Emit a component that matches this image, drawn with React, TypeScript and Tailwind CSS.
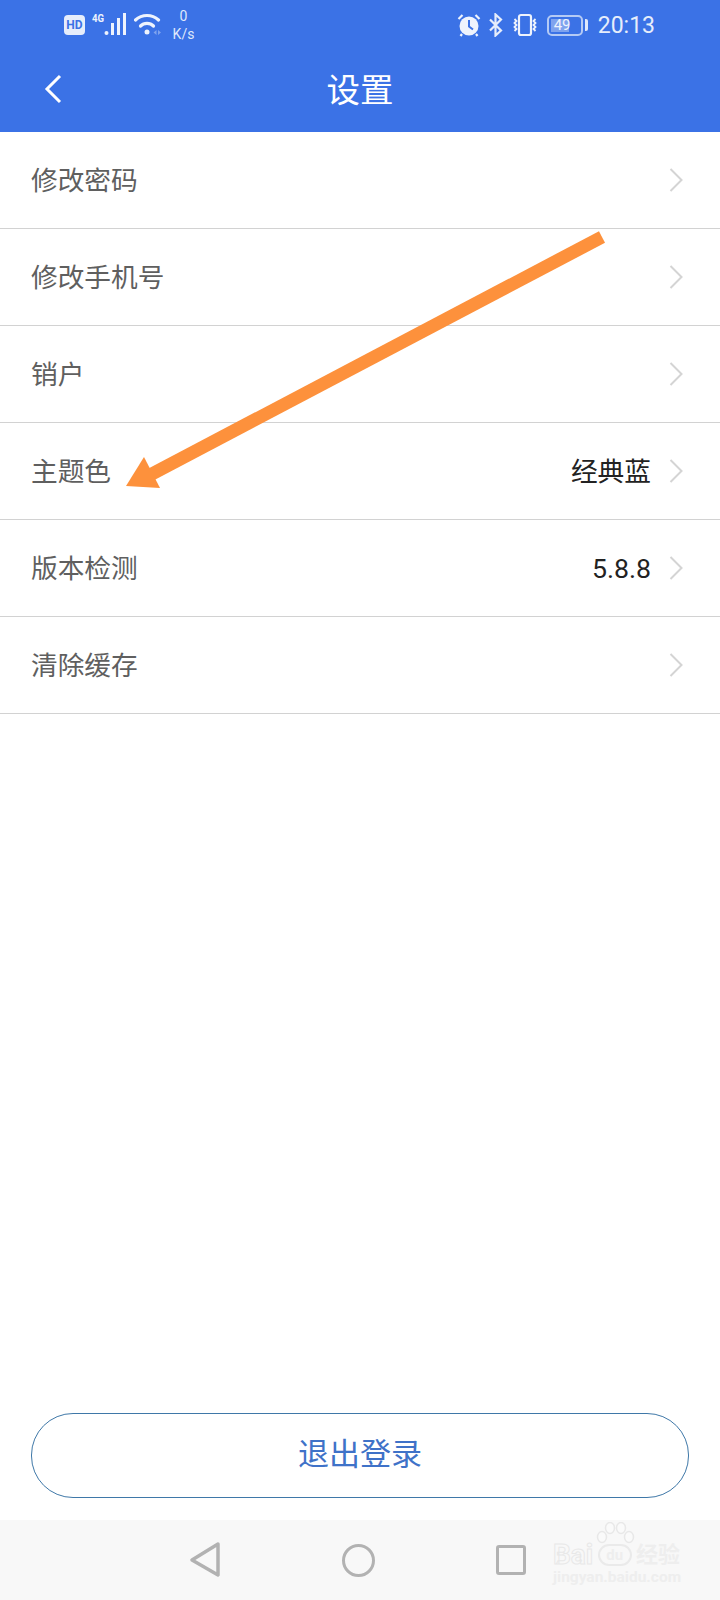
const rows = [
  { label: '修改密码' },
  { label: '修改手机号' },
  { label: '销户' },
  { label: '主题色', value: '经典蓝' },
  { label: '版本检测', value: '5.8.8' },
  { label: '清除缓存' },
];

function RowChevron() {
  return (
    <svg width="14" height="26" viewBox="0 0 14 26" fill="none" stroke="#d4d4d4" strokeWidth="2" className="shrink-0">
      <path d="M1.500 2 L12.500 13 L1.500 24" />
    </svg>
  );
}

function StatusLeft() {
  return (
    <div className="flex items-center pl-[64px]">
      <div className="flex h-[20px] w-[21px] items-center justify-center rounded-[4px] bg-[#e6edfb] text-[12px] font-bold leading-none text-[#3b72e6]">
        HD
      </div>
      <svg width="37" height="24" viewBox="0 0 37 24" className="ml-[7px]" fill="#eef3fd">
        <text x="0" y="9" fontSize="11" fontWeight="700" textLength="12" lengthAdjust="spacingAndGlyphs" fontFamily="Roboto, sans-serif">4G</text>
        <circle cx="14.500" cy="20" r="2" />
        <rect x="19" y="10" width="3" height="12" />
        <rect x="25" y="5" width="3" height="17" />
        <rect x="31" y="0" width="3" height="22" />
      </svg>
      <svg width="28" height="24" viewBox="0 0 28 24" className="ml-[5px]" fill="none" stroke="#eef3fd" strokeWidth="3.200" strokeLinecap="round">
        <path d="M1.500 7C8 1 18 1 24.500 7" />
        <path d="M6.500 13C10 9.500 16 9.500 19.500 13" />
        <circle cx="13" cy="19" r="2.500" fill="#eef3fd" stroke="none" />
        <path d="M19.500 19.500l3-2.500v5zM24 17l3 2.500-3 2.500z" fill="#7fa3ee" stroke="none" />
      </svg>
      <div className="ml-[4px] flex w-[35px] flex-col items-center text-[14px] leading-[18px] text-[#dfe8fb]">
        <span>0</span>
        <span>K/s</span>
      </div>
    </div>
  );
}

function StatusRight() {
  return (
    <div className="flex items-center pr-[65px]">
      <svg width="24" height="24" viewBox="0 0 24 24">
        <circle cx="12" cy="13" r="9.500" fill="#eef3fd" />
        <path d="M12 7v6.500l4 3" fill="none" stroke="#3b72e6" strokeWidth="2" />
        <path d="M1.500 6l4-4M22.500 6l-4-4M5 21l-1.500 2M19 21l1.500 2" fill="none" stroke="#eef3fd" strokeWidth="2.200" />
      </svg>
      <svg width="16" height="24" viewBox="0 0 16 24" className="ml-[7px]" fill="none" stroke="#e6edfb" strokeWidth="2.200">
        <path d="M2 6.500l11 11-5.500 5V1.500l5.500 5-11 11" />
      </svg>
      <svg width="26" height="24" viewBox="0 0 26 24" className="ml-[8px]" fill="none" stroke="#eef3fd" strokeWidth="2.200">
        <rect x="7" y="2" width="12" height="20" rx="2" />
        <path d="M2.500 6l2 2-2 2 2 2-2 2 2 2-2 2M23.500 6l-2 2 2 2-2 2 2 2-2 2 2 2" strokeWidth="1.800" />
      </svg>
      <div className="ml-[9px] flex items-center">
        <div className="flex h-[21px] w-[36px] items-center rounded-[5px] border-2 border-[#b4caf5] p-[2px]">
          <div className="flex h-full w-[18px] items-center bg-[#7fa3ee] pl-[3px]">
            <span className="text-[15px] leading-none tracking-[-0.2px] text-[#eef3fd]">49</span>
          </div>
        </div>
        <div className="ml-[2px] h-[12px] w-[3px] rounded-r-[2px] bg-[#dfe8fb]" />
      </div>
      <span className="ml-[10px] text-[23px] leading-none text-[#e6edfb]">20:13</span>
    </div>
  );
}

function Arrow() {
  return (
    <svg className="absolute left-0 top-0 h-[600px] w-[720px]" viewBox="0 0 720 600" fill="#fd913c">
      <path d="M602 237 L150 475" stroke="#fd913c" strokeWidth="13" />
      <path d="M144 457 L126 486 L160 488 Z" />
    </svg>
  );
}

function Watermark() {
  return (
    <div className="absolute left-[553px] top-[1522px] flex w-[127px] flex-col text-[#eeeeee]">
      <svg width="40" height="22" viewBox="0 0 40 22" className="ml-[42px]" fill="#fafafa" stroke="#e8e8e8" strokeWidth="1.500">
        <ellipse cx="7" cy="15" rx="4.500" ry="5.500" />
        <ellipse cx="15" cy="6" rx="4.500" ry="5.500" />
        <ellipse cx="26" cy="6" rx="4.500" ry="5.500" />
        <ellipse cx="34" cy="15" rx="4.500" ry="5.500" />
      </svg>
      <div className="flex h-[22px] items-center justify-between">
        <span className="text-[28px] font-bold leading-none text-transparent [-webkit-text-stroke:1px_#e8e8e8]">Bai</span>
        <span className="flex h-[22px] w-[34px] items-center justify-center rounded-full border-2 border-[#eaeaea] text-[15px] font-bold leading-none">du</span>
        <span className="text-[22px] font-bold leading-none">经验</span>
      </div>
      <span className="mt-[4px] whitespace-nowrap text-[15.500px] font-bold leading-none">jingyan.baidu.com</span>
    </div>
  );
}

export default function App() {
  return (
    <div
      className="relative flex h-[1600px] w-[720px] flex-col overflow-hidden bg-white"
      style={{ fontFamily: 'Roboto, "Noto Sans CJK SC", sans-serif' }}
    >
      <header className="flex h-[132px] flex-col bg-[#3b72e6]">
        <div className="flex h-[50px] items-center justify-between">
          <StatusLeft />
          <StatusRight />
        </div>
        <div className="grid flex-1 grid-cols-[1fr_auto_1fr] items-center">
          <svg width="18" height="30" viewBox="0 0 18 30" fill="none" stroke="#ffffff" strokeWidth="3" className="ml-[44px] mt-[-4px]">
            <path d="M16 2 L3 15 L16 28" />
          </svg>
          <h1 className="text-[33.500px] leading-none text-white">设置</h1>
        </div>
      </header>

      <main className="flex-1">
        {rows.map((row) => (
          <div key={row.label} className="flex h-[97px] items-center border-b border-[#d2d2d2] pl-[31px] pr-[37px]">
            <span className="pt-[2px] text-[26.700px] text-[#5f5f5f]">{row.label}</span>
            {row.value ? (
              <span className="ml-auto mr-[18px] pt-[2px] text-[26.700px] text-[#222222]">{row.value}</span>
            ) : (
              <span className="ml-auto" />
            )}
            <RowChevron />
          </div>
        ))}
      </main>

      <div className="flex h-[107px] justify-center">
        <button
          type="button"
          className="h-[85px] w-[658px] rounded-[42px] border border-[#3f78a8] text-[31px] text-[#3f72c8]"
        >
          退出登录
        </button>
      </div>

      <nav className="flex h-[80px] items-center justify-center gap-[121px] bg-[#f8f8f8] pr-[5px]">
        <svg width="32" height="36" viewBox="0 0 32 36" fill="none" stroke="#b2b2b2" strokeWidth="3.500" strokeLinejoin="round">
          <path d="M29 2 L3 18 L29 33 Z" />
        </svg>
        <div className="h-[33px] w-[33px] rounded-full border-[3.500px] border-[#b2b2b2]" />
        <div className="h-[30px] w-[30px] rounded-[3px] border-[3.500px] border-[#b2b2b2]" />
      </nav>

      <Arrow />
      <Watermark />
    </div>
  );
}
